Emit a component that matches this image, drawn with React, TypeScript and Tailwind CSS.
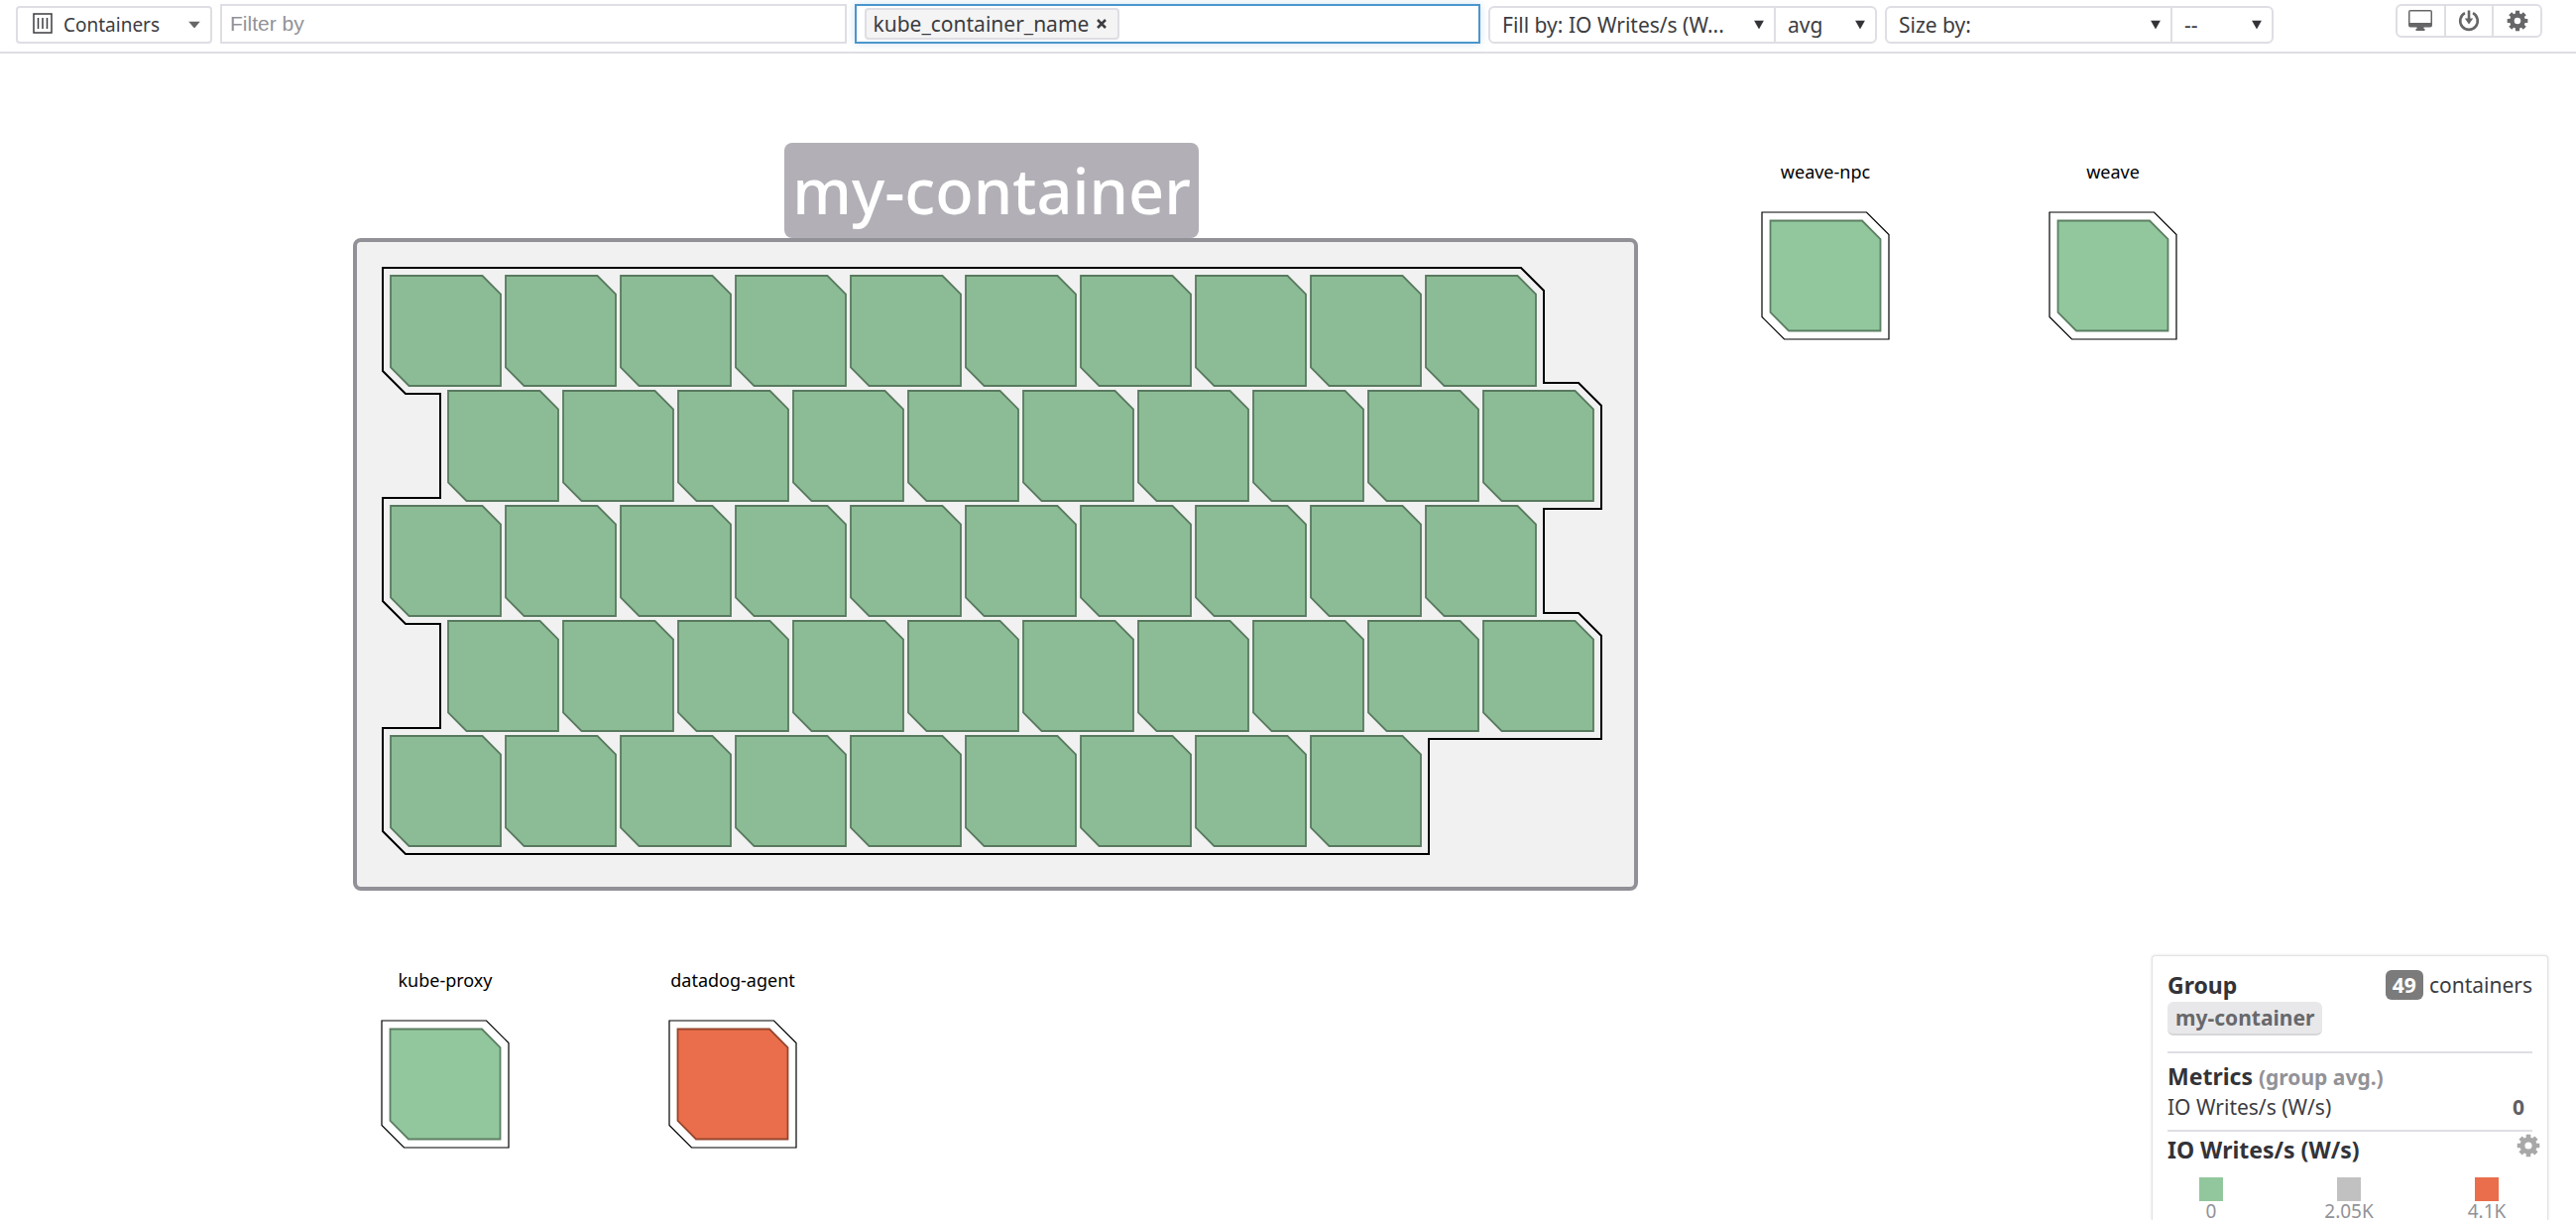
import React from "react";

type Point = [number, number];

const PITCH = 116;
const SIDE = 111;
const GREEN = "#92c79d";
const ORANGE = "#ea6e4b";

const toPoints = (pts: Point[]) => pts.map((p) => p.join(",")).join(" ");

/** A square whose top-right and bottom-left corners are cut off. */
function cutSquare(x: number, y: number, side: number, cut: number): Point[] {
  return [
    [x, y],
    [x + side - cut, y],
    [x + side, y + cut],
    [x + side, y + side],
    [x + cut, y + side],
    [x, y + side - cut],
  ];
}

function gearPath(cx: number, cy: number, outer: number, inner: number, hole: number) {
  const pts: string[] = [];
  const teeth = 8;
  for (let i = 0; i < teeth; i++) {
    const a = (i * 2 * Math.PI) / teeth;
    const corners: [number, number][] = [
      [inner, -0.27],
      [outer, -0.2],
      [outer, 0.2],
      [inner, 0.27],
    ];
    for (const [r, d] of corners) {
      pts.push(`${(cx + r * Math.sin(a + d)).toFixed(2)} ${(cy - r * Math.cos(a + d)).toFixed(2)}`);
    }
  }
  return `M${pts.join("L")}Z M${cx - hole} ${cy}a${hole} ${hole} 0 1 0 ${hole * 2} 0a${hole} ${hole} 0 1 0 ${-hole * 2} 0Z`;
}

function GearIcon({ className }: { className: string }) {
  return (
    <svg viewBox="0 0 24 24" className={className} fill="currentColor" aria-hidden="true">
      <path fillRule="evenodd" d={gearPath(12, 12, 11.5, 8.6, 3.6)} />
    </svg>
  );
}

function MonitorIcon() {
  return (
    <svg viewBox="0 0 24 22" className="h-[22px] w-6" fill="currentColor" aria-hidden="true">
      <path
        fillRule="evenodd"
        d="M2 0h20a2 2 0 0 1 2 2v13.500a2 2 0 0 1-2 2h-6.500v1.500h1v2h-9v-2h1v-1.500H2a2 2 0 0 1-2-2V2a2 2 0 0 1 2-2zM1.500 1.500v11.500h21V1.500z"
      />
    </svg>
  );
}

function DownloadIcon() {
  return (
    <svg viewBox="0 0 22 22" className="size-[22px]" fill="none" stroke="currentColor" aria-hidden="true">
      <path d="M7 3.200A8.800 8.800 0 1 0 15 3.200" strokeWidth="2.600" />
      <path d="M11 0.500V10" strokeWidth="2.600" />
      <path d="M6.800 8.500h8.400L11 14.500z" fill="currentColor" stroke="none" />
    </svg>
  );
}

function SelectBox({
  label,
  value,
  className,
}: {
  label: string;
  value: string;
  className: string;
}) {
  return (
    <div className={`relative ${className}`}>
      <select
        aria-label={label}
        className="h-full w-full appearance-none bg-transparent pl-3 pr-8 text-[21px] leading-7 text-[#3c3c41] outline-none"
      >
        <option>{value}</option>
      </select>
      <svg
        viewBox="0 0 10 9"
        className="pointer-events-none absolute right-2.5 top-1/2 h-[9px] w-2.5 -translate-y-1/2"
        aria-hidden="true"
      >
        <path d="M0 0h10L5 9z" fill="#333338" />
      </svg>
    </div>
  );
}

function Toolbar() {
  return (
    <header className="flex items-start gap-2 border-b-2 border-[#dedee4] pb-2 pl-4 pr-[34px] pt-1">
      <div className="relative mt-0.5 h-[38px] w-[198px] shrink-0 rounded border-2 border-[#dedee4]">
        <svg
          viewBox="0 0 20 21"
          className="pointer-events-none absolute left-[15px] top-[5px] h-[21px] w-5"
          fill="none"
          stroke="#3c3c41"
          aria-hidden="true"
        >
          <rect x="1" y="1" width="18" height="19" strokeWidth="1.500" />
          <path d="M5.500 5v11M10 5v11M14.500 5v11" strokeWidth="1.500" />
        </svg>
        <select
          aria-label="Infrastructure type"
          className="h-full w-full appearance-none bg-transparent pl-[46px] pr-8 text-[19px] leading-7 text-[#3c3c41] outline-none"
        >
          <option>Containers</option>
        </select>
        <svg
          viewBox="0 0 12 7"
          className="pointer-events-none absolute right-2.5 top-1/2 h-[7px] w-3 -translate-y-1/2"
          aria-hidden="true"
        >
          <path d="M0 0h12L6 7z" fill="#666" />
        </svg>
      </div>

      <input
        type="text"
        aria-label="Filter by"
        placeholder="Filter by"
        className="h-10 min-w-0 flex-1 border-2 border-[#dedee4] px-2 font-['Liberation_Sans',sans-serif] text-[21px] text-[#3c3c41] outline-none placeholder:text-[#929297]"
      />

      <div className="flex h-10 min-w-0 flex-1 items-center border-2 border-[#4b96cc] px-2 shadow-[0_0_8px_rgba(75,150,204,0.25)]">
        <span className="flex h-8 shrink-0 items-center rounded border-2 border-[#dedee4] bg-[#f4f4f4] px-[7px] text-[21px] leading-7 text-[#3c3c41]">
          kube_container_name
          <button type="button" aria-label="Remove kube_container_name" className="ml-2 mr-1">
            <svg viewBox="0 0 10 10" className="size-2.5" aria-hidden="true">
              <path d="M1 1l8 8M9 1l-8 8" stroke="#3c3c41" strokeWidth="2.500" />
            </svg>
          </button>
        </span>
        <input type="text" aria-label="Group by" className="min-w-0 flex-1 bg-transparent outline-none" />
      </div>

      <div className="mt-0.5 flex h-[38px] w-[392px] shrink-0 rounded-md border-2 border-[#dedee4]">
        <SelectBox label="Fill by" value="Fill by: IO Writes/s (W..." className="flex-1" />
        <SelectBox label="Fill aggregation" value="avg" className="w-[102px] border-l-2 border-[#dedee4]" />
      </div>

      <div className="mt-0.5 flex h-[38px] w-[392px] shrink-0 rounded-md border-2 border-[#dedee4]">
        <SelectBox label="Size by" value="Size by:" className="flex-1" />
        <SelectBox label="Size aggregation" value="--" className="w-[102px] border-l-2 border-[#dedee4]" />
      </div>

      <div className="ml-[115px] flex h-[34px] w-[148px] shrink-0 divide-x-2 divide-[#dedee4] rounded-md border-2 border-[#dedee4] text-[#666669]">
        <button type="button" aria-label="Full screen" className="flex flex-1 items-center justify-center">
          <MonitorIcon />
        </button>
        <button type="button" aria-label="Download" className="flex flex-1 items-center justify-center">
          <DownloadIcon />
        </button>
        <button type="button" aria-label="Settings" className="flex flex-1 items-center justify-center">
          <GearIcon className="size-[22px]" />
        </button>
      </div>
    </header>
  );
}

const ROWS = [
  { offset: 0, count: 10 },
  { offset: 58, count: 10 },
  { offset: 0, count: 10 },
  { offset: 58, count: 10 },
  { offset: 0, count: 9 },
];

const OUTLINE: Point[] = [
  [2, 2],
  [1150, 2], [1173, 25], [1173, 118],
  [1208, 118], [1231, 141], [1231, 245], [1173, 245], [1173, 350],
  [1208, 350], [1231, 373], [1231, 477], [1057, 477], [1057, 593],
  [25, 593], [2, 570], [2, 466],
  [60, 466], [60, 361], [25, 361], [2, 338], [2, 234],
  [60, 234], [60, 129], [25, 129], [2, 106],
];

function SelectedGroup() {
  return (
    <section className="w-[1296px] shrink-0">
      <div className="flex justify-center pr-2">
        <h2 className="flex h-24 items-center rounded-lg bg-[#b2b0b6] px-2 text-[63px] font-medium leading-[94px] text-white">
          my-container
        </h2>
      </div>
      <div className="rounded-lg border-4 border-[#929197] bg-[#f1f1f1] p-6">
        <svg viewBox="0 0 1240 602" className="block w-full" role="img" aria-label="49 containers">
          <polygon points={toPoints(OUTLINE)} fill="none" stroke="#000" strokeWidth="2" />
          {ROWS.map((row, r) =>
            Array.from({ length: row.count }, (_, c) => (
              <polygon
                key={`${r}-${c}`}
                points={toPoints(cutSquare(10 + row.offset + c * PITCH, 10 + r * PITCH, SIDE, 18.5))}
                fill="#8cbc95"
                stroke="#587a5f"
                strokeWidth="1.8"
              />
            )),
          )}
        </svg>
      </div>
    </section>
  );
}

function NodeGroup({ name, fill, stroke }: { name: string; fill: string; stroke: string }) {
  return (
    <section className="flex w-[290px] shrink-0 flex-col items-center gap-7">
      <h3 className="text-lg leading-6 text-black">{name}</h3>
      <svg viewBox="0 0 130 130" className="size-[130px]" role="img" aria-label={name}>
        <polygon points={toPoints(cutSquare(1, 1, 128, 22.5))} fill="#fff" stroke="#000" strokeWidth="1.2" />
        <polygon points={toPoints(cutSquare(9.5, 9.5, SIDE, 18.5))} fill={fill} stroke={stroke} strokeWidth="1.8" />
      </svg>
    </section>
  );
}

const LEGEND = [
  { label: "0", swatch: "bg-[#92c79d]" },
  { label: "2.05K", swatch: "bg-[#c1c1c1]" },
  { label: "4.1K", swatch: "bg-[#ea6e4b]" },
];

function GroupCard() {
  return (
    <aside className="absolute bottom-0 right-7 h-[267px] w-[400px] overflow-hidden rounded-t border border-b-0 border-[#e2e2e4] bg-white px-[15px] pt-3.5 text-[21px] leading-7 text-[#3c3c41] shadow-[0_0_3px_rgba(0,0,0,0.12)]">
      <div className="flex h-[30px] items-center justify-between">
        <h2 className="text-[23px] font-bold text-[#333338]">Group</h2>
        <p className="flex items-center gap-1.5">
          <span className="h-[30px] rounded-md bg-[#7b7b7b] px-[7px] font-bold leading-[30px] text-white">49</span>
          containers
        </p>
      </div>
      <span className="mt-0.5 inline-block h-[34px] rounded-md border-b-2 border-[#d6d6d8] bg-[#e8e8ea] px-2 align-top font-bold leading-8 text-[#68686b]">
        my-container
      </span>
      <section className="mt-4 border-t-2 border-[#dedee4] pt-2">
        <h3 className="text-[23px] font-bold leading-[30px] text-[#333338]">
          Metrics <span className="text-[21px] text-[#929297]">(group avg.)</span>
        </h3>
        <div className="flex items-center justify-between pr-2 leading-[30px]">
          <span>IO Writes/s (W/s)</span>
          <span className="font-bold text-[#606063]">0</span>
        </div>
      </section>
      <section className="relative mt-2 border-t-2 border-[#dedee4] pt-1">
        <h3 className="text-[23px] font-bold text-[#333338]">IO Writes/s (W/s)</h3>
        <button type="button" aria-label="Legend settings" className="absolute -right-2 top-0.5 text-[#a8a8a8]">
          <GearIcon className="size-6" />
        </button>
        <ul className="mt-3.5 flex justify-between pr-0.5 text-[19px] leading-5 text-[#929297]">
          {LEGEND.map((item) => (
            <li key={item.label} className="flex w-[88px] flex-col items-center">
              <span className={`size-6 ${item.swatch}`} />
              {item.label}
            </li>
          ))}
        </ul>
      </section>
    </aside>
  );
}

export default function App() {
  return (
    <div className="relative flex h-screen flex-col overflow-hidden bg-white font-['Noto_Sans',sans-serif]">
      <Toolbar />
      <main className="flex-1 pt-[90px]">
        <div className="flex items-start pl-[356px]">
          <SelectedGroup />
          <div className="ml-11 flex pt-[17px]">
            <NodeGroup name="weave-npc" fill={GREEN} stroke="#5c7f63" />
            <NodeGroup name="weave" fill={GREEN} stroke="#5c7f63" />
          </div>
        </div>
        <div className="mt-[78px] flex pl-[304px]">
          <NodeGroup name="kube-proxy" fill={GREEN} stroke="#5c7f63" />
          <NodeGroup name="datadog-agent" fill={ORANGE} stroke="#96462f" />
        </div>
      </main>
      <GroupCard />
    </div>
  );
}
